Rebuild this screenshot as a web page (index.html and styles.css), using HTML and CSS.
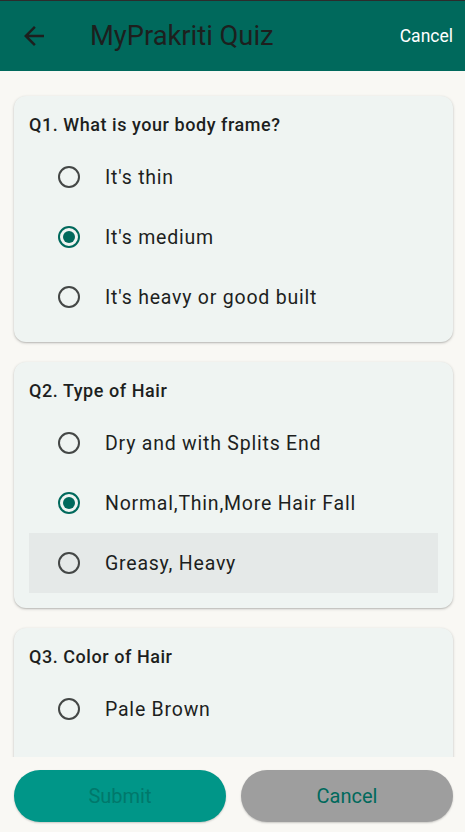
FILE: index.html
```html
<!DOCTYPE html>
<html>
<head>
<meta charset="utf-8">
<link rel="stylesheet" href="styles.css">
</head>
<body>
<div class="app">
  <header class="appbar">
    <svg class="back" viewBox="0 0 24 24" width="30" height="30"><path d="M20 11H7.83l5.59-5.59L12 4l-8 8 8 8 1.41-1.41L7.83 13H20v-2z" fill="#1d1f1e"/></svg>
    <div class="title">MyPrakriti Quiz</div>
    <div class="bar-cancel">Cancel</div>
  </header>
  <main class="scroll">
    <section class="card">
      <h2 class="q">Q1. What is your body frame?</h2>
      <div class="opt"><span class="radio"></span><span class="label">It's thin</span></div>
      <div class="opt"><span class="radio on"></span><span class="label">It's medium</span></div>
      <div class="opt"><span class="radio"></span><span class="label">It's heavy or good built</span></div>
    </section>
    <section class="card">
      <h2 class="q">Q2. Type of Hair</h2>
      <div class="opt"><span class="radio"></span><span class="label">Dry and with Splits End</span></div>
      <div class="opt"><span class="radio on"></span><span class="label">Normal,Thin,More Hair Fall</span></div>
      <div class="opt hl"><span class="radio"></span><span class="label">Greasy, Heavy</span></div>
    </section>
    <section class="card card-tall">
      <h2 class="q">Q3. Color of Hair</h2>
      <div class="opt"><span class="radio"></span><span class="label">Pale Brown</span></div>
    </section>
  </main>
  <footer class="bottom">
    <button class="btn submit">Submit</button>
    <button class="btn cancel">Cancel</button>
  </footer>
</div>
</body>
</html>
```
FILE: styles.css
```css
* { box-sizing: border-box; }
html, body { margin: 0; padding: 0; }
body {
  font-family: Roboto, "Noto Sans", sans-serif;
  background: #f9f8f4;
  width: 465px;
  height: 832px;
  overflow: hidden;
}
.app {
  display: flex;
  flex-direction: column;
  height: 832px;
}
.appbar {
  height: 71px;
  flex: none;
  background: #00695c;
  border-top: 1px solid #2c2c2c;
  display: flex;
  align-items: center;
  padding: 0 12px 0 19px;
}
.back { flex: none; display: block; }
.title {
  margin-left: 41px;
  font-size: 27.3px;
  color: #1d1f1e;
  flex: 1;
}
.bar-cancel {
  color: #ffffff;
  font-size: 17.5px;
  font-weight: 400;
}
.scroll {
  flex: 1;
  overflow: hidden;
  padding: 25px 12px 0 14px;
  display: flex;
  flex-direction: column;
  gap: 20px;
}
.card {
  flex: none;
  background: #eff4f2;
  border-radius: 12px;
  box-shadow: 0 1px 3px rgba(0,0,0,0.22), 0 1px 1px rgba(0,0,0,0.08);
  padding: 17px 15px 15px 15px;
}
.card-tall { padding-bottom: 80px; }
.q {
  margin: 0 0 10px 0;
  font-size: 18px;
  letter-spacing: 0.55px;
  line-height: 24px;
  font-weight: 500;
  color: #1d1f1e;
}
.opt {
  height: 60px;
  display: flex;
  align-items: center;
  padding-left: 29px;
}
.opt.hl { background: #e5e9e8; }
.radio {
  width: 22px;
  height: 22px;
  border: 2px solid #444746;
  border-radius: 50%;
  flex: none;
  display: flex;
  align-items: center;
  justify-content: center;
}
.radio.on { border-color: #00695c; }
.radio.on::after {
  content: "";
  width: 12px;
  height: 12px;
  border-radius: 50%;
  background: #00695c;
}
.label {
  margin-left: 25px;
  font-size: 19.5px;
  letter-spacing: 0.78px;
  color: #1d1f1e;
}
.bottom {
  height: 75px;
  flex: none;
  background: #f9f8f4;
  display: flex;
  gap: 15px;
  padding: 13px 12px 10px 14px;
}
.btn {
  flex: 1;
  height: 52px;
  border: none;
  border-radius: 26px;
  font-family: Roboto, "Noto Sans", sans-serif;
  font-size: 20px;
  box-shadow: 0 1px 2px rgba(0,0,0,0.2);
}
.submit { background: #009688; color: #00786b; }
.cancel { background: #9e9e9e; color: #00695c; }
```
